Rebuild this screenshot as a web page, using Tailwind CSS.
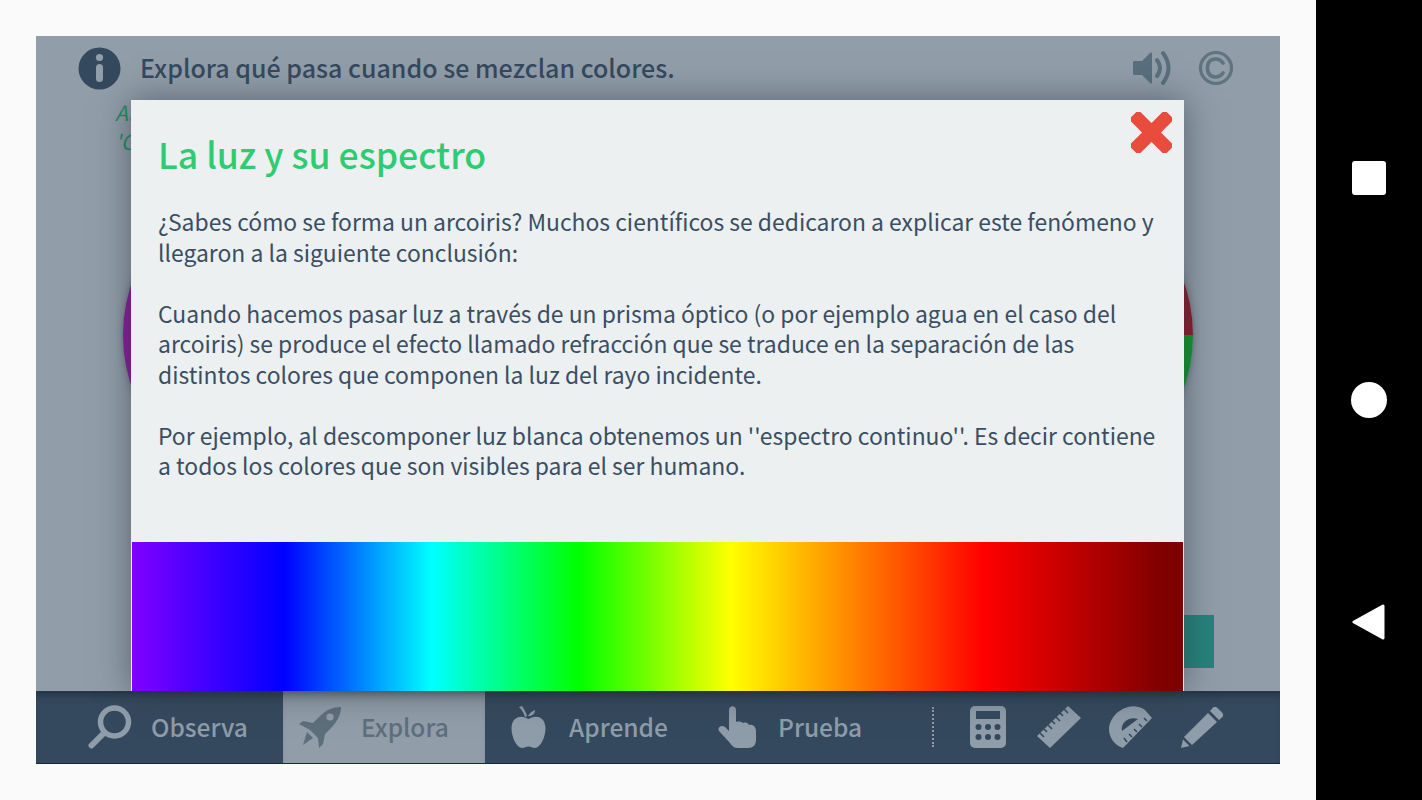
<!DOCTYPE html>
<html lang="es">
<head>
  <meta charset="UTF-8" />
  <title>La luz y su espectro</title>
  <script src="https://cdn.jsdelivr.net/npm/@tailwindcss/browser@4"></script>
</head>
<body class="font-['Noto_Sans_CJK_SC','Noto_Sans',sans-serif] bg-[#fafafa] overflow-hidden">
<div class="flex w-[1422px] h-[800px]">

  <!-- app area -->
  <div class="flex-1 p-[36px]">
    <div class="relative w-[1244px] h-[728px] flex flex-col bg-[#919da9] overflow-hidden">

      <!-- header -->
      <header class="flex items-center h-[64px] pl-[42px] pr-[46px] gap-[19px]">
        <svg class="w-[43px] h-[43px]" viewBox="0 0 43 43">
          <circle cx="21.5" cy="21.5" r="21" fill="#35495e"/>
          <circle cx="21.5" cy="10.5" r="3.6" fill="#919da9"/>
          <rect x="18" y="17" width="7" height="18" rx="3.5" fill="#919da9"/>
        </svg>
        <h2 class="flex-1 pb-[3px] text-[25px] leading-[32px] font-medium text-[#35495e]">Explora qué pasa cuando se mezclan colores.</h2>
        <svg class="w-[38px] h-[36px] mr-[27px]" viewBox="0 0 38 36" fill="#5a6f7d">
          <path d="M1 11 H9 L17 3 Q19 1 19 4 V32 Q19 35 17 33 L9 25 H1 Q0 25 0 24 V12 Q0 11 1 11Z"/>
          <path d="M24 10 Q30 18 24 26" fill="none" stroke="#5a6f7d" stroke-width="4" stroke-linecap="round"/>
          <path d="M30 3 Q41 18 30 33" fill="none" stroke="#5a6f7d" stroke-width="4" stroke-linecap="round"/>
        </svg>
        <svg class="w-[36px] h-[36px] -ml-[19px]" viewBox="0 0 36 36" fill="none" stroke="#5f7380">
          <circle cx="18" cy="18" r="15.5" stroke-width="3.2"/>
          <path d="M25 13 Q22 9 18 9 Q9.5 9 9.5 18 Q9.5 27 18 27 Q22 27 25 23" stroke-width="3.6" stroke-linecap="round"/>
        </svg>
      </header>

      <!-- explore content, mostly hidden by the modal -->
      <main class="flex-1 relative">
        <p class="absolute left-[79px] top-[-2px] italic text-[21px] leading-[29px] text-[#238f60]">Al<br />'Cu</p>
        <div class="absolute left-[87px] top-[75px] w-[320px] h-[320px] rounded-full bg-[#8a1a9c] shadow-[0_0_6px_rgba(60,70,80,.5)]"></div>
        <div class="absolute left-[837px] top-[75px] w-[320px] h-[320px] rounded-full overflow-hidden flex flex-col shadow-[0_0_6px_rgba(60,70,80,.5)]">
          <div class="flex-1 bg-[#8c1c2c]"></div>
          <div class="flex-1 bg-[#0f9a2c]"></div>
        </div>
        <div class="absolute left-[1100px] top-[515px] w-[78px] h-[53px] bg-[#26837d]"></div>
      </main>

      <!-- bottom nav -->
      <nav class="relative z-10 flex items-center h-[73px] bg-[#35495e] border-b border-[#0f2a48] text-[24.5px] font-medium text-[#8f9ca9] shadow-[inset_0_9px_8px_-6px_rgba(15,25,35,.55)]">
        <div class="flex items-center w-[247px] h-full pl-[52px]">
          <svg class="w-[44px] h-[44px] mr-[19px]" viewBox="0 0 44 44" fill="none" stroke="#8f9ca9">
            <circle cx="26.5" cy="17" r="14" stroke-width="5.5"/>
            <path d="M15 29 L3.5 40.5" stroke-width="6" stroke-linecap="round"/>
          </svg>
          <span>Observa</span>
        </div>
        <div class="flex items-center w-[202px] h-full pl-[15px] bg-[#919da9] text-[#5e6f7c] shadow-[inset_0_9px_8px_-6px_rgba(15,25,35,.45)]">
          <svg class="w-[44px] h-[42px] mr-[19px]" viewBox="0 0 44 42">
            <path fill="#5e6f7c" d="M43 1 C35 1 28 4 22 10 L15 17 L5 15 L1 18 L12 24 L20 32 L21 42 L25 38 L27 28 L34 21 C40 14 43 8 43 1Z"/>
            <circle cx="32" cy="11" r="3.6" fill="#919da9"/>
            <path fill="#5e6f7c" d="M9 26 L15 32 L5 39 Z"/>
          </svg>
          <span>Explora</span>
        </div>
        <div class="flex items-center w-[209px] h-full pl-[26px]">
          <svg class="w-[35px] h-[42px] mr-[23px]" viewBox="0 0 35 42" fill="#8f9ca9">
            <path d="M17.5 13 C12 9 1 9 0.5 22 C0.5 32 6 42 11 42 C14 42 15 40.5 17.5 40.5 C20 40.5 21 42 24 42 C29 42 34.5 32 34.5 22 C34 9 23 9 17.5 13Z"/>
            <path d="M8 1 L11 0 C13 3 15 6 16 10 L14 11 C13 7 11 4 8 1Z"/>
            <path d="M17 10 C19 7 21 5 24 4 C24 8 21 10 17 10Z"/>
          </svg>
          <span>Aprende</span>
        </div>
        <div class="flex items-center w-[238px] h-full pl-[24px]">
          <svg class="w-[38px] h-[42px] mr-[22px]" viewBox="0 0 38 42" fill="#8f9ca9">
            <path d="M11 4 C11 -1 18 -1 18 4 V16 C21 15 24 16 25 17 C28 16 30 17 31 19 C35 18 38 21 38 25 V34 C38 39 35 42 30 42 H20 C16 42 14 40 12 37 L1 25 C-1 22 3 18 7 21 L11 25Z"/>
          </svg>
          <span>Prueba</span>
        </div>
        <div class="w-0 h-[40px] border-l-2 border-dotted border-[#8f9ca9] mr-[36px]"></div>
        <svg class="w-[36px] h-[42px] mr-[31px]" viewBox="0 0 36 42">
          <rect width="36" height="42" rx="5" fill="#8f9ca9"/>
          <rect x="6" y="5" width="24" height="8" fill="#35495e"/>
          <g fill="#35495e">
            <circle cx="8.5" cy="21" r="3"/><circle cx="18" cy="21" r="3"/><circle cx="27.5" cy="21" r="3"/>
            <circle cx="8.5" cy="31" r="3"/><circle cx="18" cy="31" r="3"/><circle cx="27.5" cy="31" r="3"/>
          </g>
        </svg>
        <svg class="w-[44px] h-[42px] mr-[28px]" viewBox="0 0 44 42">
          <path fill="#8f9ca9" d="M0 30 L31 0 L44 12 L13 42Z"/>
          <path stroke="#35495e" stroke-width="1.6" d="M27 3 L31 7 M23 7 L26 10 M19 11 L23 15 M15 15 L18 18 M11 19 L15 23 M7 23 L10 26 M3 27 L7 31"/>
        </svg>
        <svg class="w-[44px] h-[44px] mr-[28px]" viewBox="0 0 44 44">
          <path fill="#8f9ca9" d="M36 5 L43 13 L14 43 C5 40 0 32 0 24 C0 9 21 -6 36 5Z"/>
          <path fill="#35495e" d="M13 26 C11 18 20 11 29 14Z"/>
          <path stroke="#35495e" stroke-width="1.6" d="M18 37 L15 33 M23 32 L20 29 M28 27 L25 24 M33 22 L30 19 M38 16 L35 13"/>
        </svg>
        <svg class="w-[43px] h-[42px]" viewBox="0 0 43 42" fill="#8f9ca9">
          <path d="M32 1.500 Q34 0 36 1.500 L41.500 7 Q43 9 41.500 11 L38 14 L29 5Z"/>
          <path d="M27 7 L36 16 L11 39 L3 31Z"/>
          <path d="M2 33.500 L8.500 40 L0 42Z"/>
        </svg>
      </nav>

      <!-- modal -->
      <section class="absolute z-20 left-[95px] top-[64px] w-[1053px] h-[591px] flex flex-col bg-[#ecf0f1] shadow-[0_0_32px_rgba(40,50,60,.55)]">
        <svg class="absolute right-[12px] top-[12px] w-[41px] h-[41px]" viewBox="0 0 43 43" fill="#e74c3c">
          <rect x="-5" y="14.500" width="53" height="14" rx="3" transform="rotate(45 21.500 21.500)"/>
          <rect x="-5" y="14.500" width="53" height="14" rx="3" transform="rotate(-45 21.500 21.500)"/>
        </svg>
        <div class="flex-1 pl-[27px] pt-[31px] text-[22.9px] leading-[30.5px] whitespace-nowrap text-[#3a4e63]">
          <h1 class="text-[35.500px] leading-[46px] font-medium text-[#2ecc71] mb-[29px]">La luz y su espectro</h1>
          <p class="mb-[30.5px]">¿Sabes cómo se forma un arcoiris? Muchos científicos se dedicaron a explicar este fenómeno y<br />llegaron a la siguiente conclusión:</p>
          <p class="mb-[30.5px]">Cuando hacemos pasar luz a través de un prisma óptico (o por ejemplo agua en el caso del<br />arcoiris) se produce el efecto llamado refracción que se traduce en la separación de las<br />distintos colores que componen la luz del rayo incidente.</p>
          <p>Por ejemplo, al descomponer luz blanca obtenemos un ''espectro continuo''. Es decir contiene<br />a todos los colores que son visibles para el ser humano.</p>
        </div>
        <div class="h-[149px] mx-[1px] shrink-0 bg-[linear-gradient(90deg,#8000ff_0%,#0000ff_14.500%,#00ffff_28.500%,#00ff00_42.500%,#ffff00_57%,#ff0000_81%,#800000_98%)]"></div>
      </section>
    </div>
  </div>

  <!-- android nav bar -->
  <aside class="w-[106px] bg-black flex flex-col items-center pt-[161px]">
    <div class="w-[34px] h-[34px] rounded-[3px] bg-white mb-[187px]"></div>
    <div class="w-[36px] h-[36px] rounded-full bg-white mb-[186px]"></div>
    <svg class="w-[34px] h-[36px]" viewBox="0 0 34 36">
      <path fill="white" stroke="white" stroke-width="3" stroke-linejoin="round" d="M2 18 L31 2 V34Z"/>
    </svg>
  </aside>
</div>
</body>
</html>
